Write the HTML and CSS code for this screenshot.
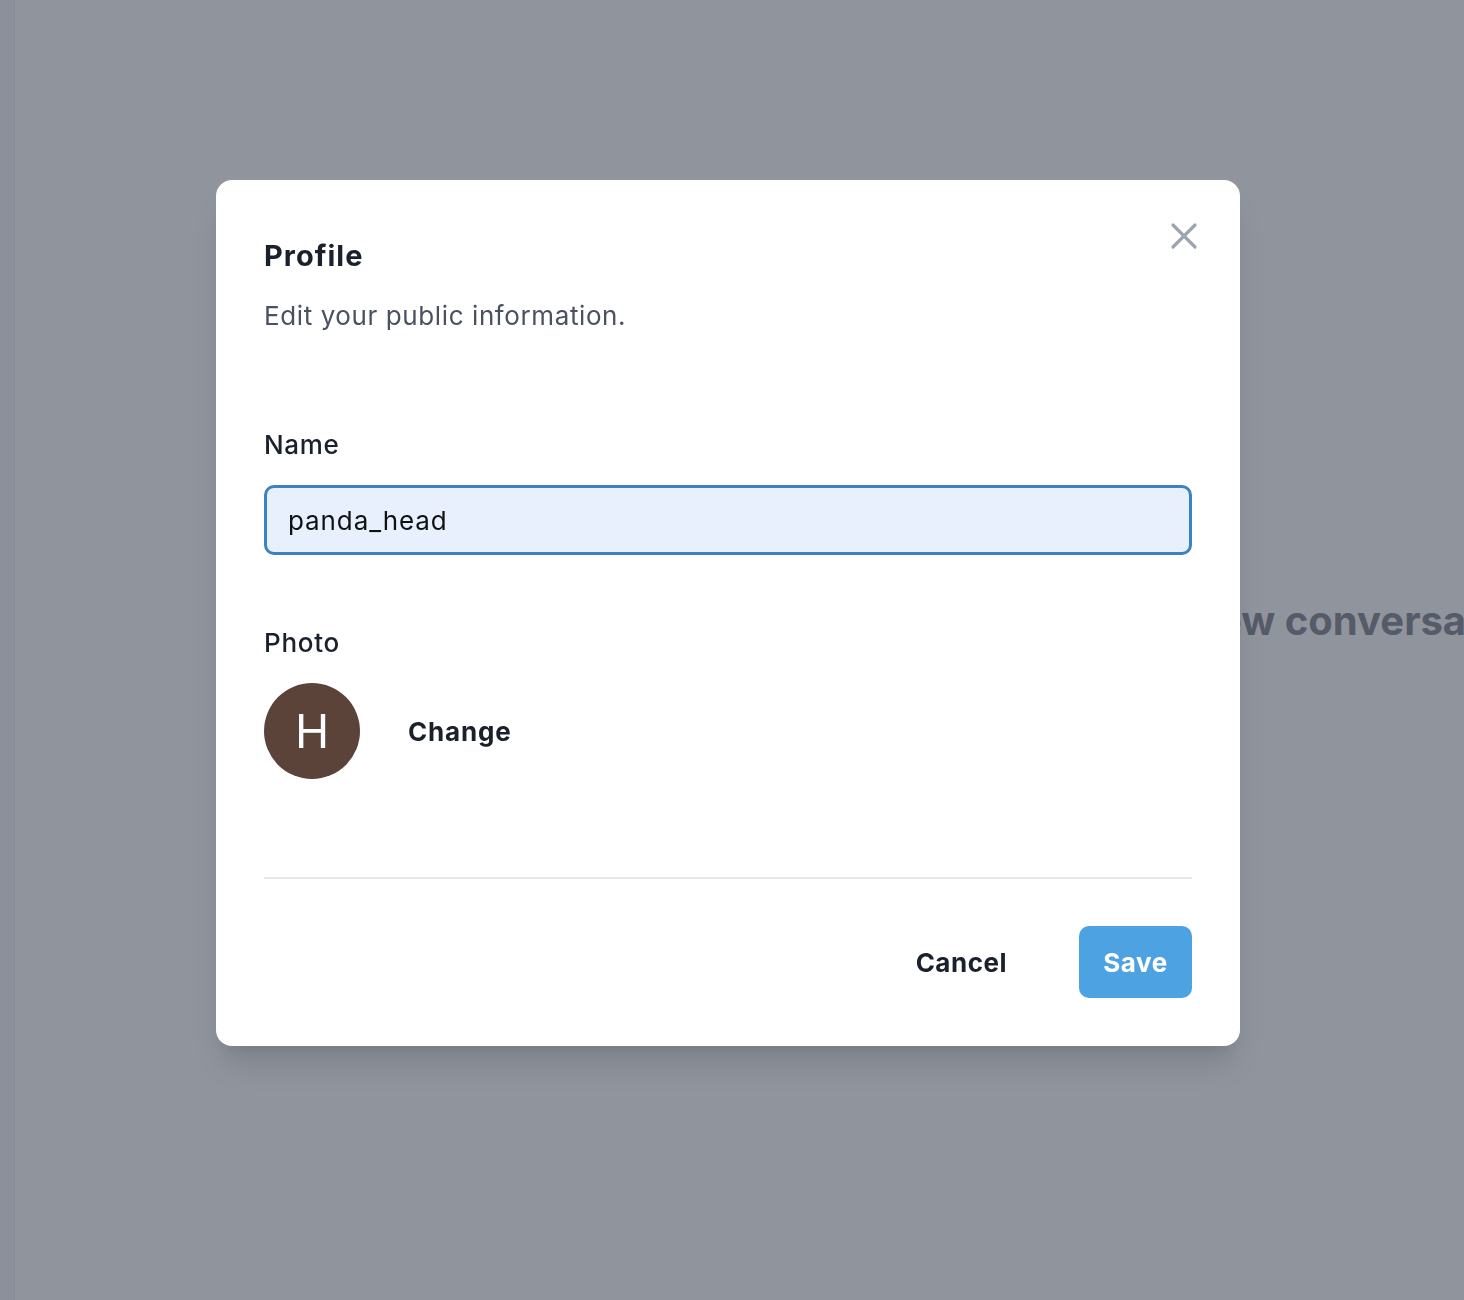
FILE: index.html
```html
<!DOCTYPE html>
<html lang="en">
<head>
<meta charset="utf-8">
<title>Profile</title>
<link rel="stylesheet" href="styles.css">
</head>
<body>
<div class="app">
  <aside class="sidebar"></aside>
  <main class="main">
    <h2 class="empty-title">Start a new conversation</h2>
  </main>
</div>
<div class="overlay">
  <div class="modal" role="dialog" aria-labelledby="dlg-title">
    <button class="close" aria-label="Close">
      <svg width="28" height="28" viewBox="0 0 28 28" fill="none" stroke="#9ea4af" stroke-width="3.2" stroke-linecap="round"><path d="M3 3L25 25M25 3L3 25"/></svg>
    </button>
    <h1 id="dlg-title" class="title">Profile</h1>
    <p class="subtitle">Edit your public information.</p>
    <div class="field">
      <label class="label" for="name">Name</label>
      <div class="input">panda_head</div>
    </div>
    <div class="field photo-field">
      <div class="label">Photo</div>
      <div class="photo-row">
        <div class="avatar">H</div>
        <button class="change">Change</button>
      </div>
    </div>
    <div class="divider"></div>
    <div class="actions">
      <button class="btn-cancel">Cancel</button>
      <button class="btn-save">Save</button>
    </div>
  </div>
</div>
</body>
</html>
```
FILE: styles.css
```css
* { box-sizing: border-box; }
html, body { margin: 0; padding: 0; }
body {
  font-family: Inter, "Noto Sans", "Liberation Sans", sans-serif;
  background: #ffffff;
  width: 1464px;
  height: 1300px;
  overflow: hidden;
}
.app {
  display: flex;
  height: 1300px;
}
.sidebar {
  width: 15px;
  background: #f4f5f7;
  border-right: 1px solid #e3e5e9;
}
.main {
  flex: 1;
  display: flex;
  align-items: flex-start;
  padding-top: 597px;
  padding-left: 1040px;
  white-space: nowrap;
  overflow: hidden;
}
.empty-title {
  margin: 0;
  font-size: 40px;
  font-weight: 700;
  color: #6c707a;
  line-height: 48px;
}
.overlay {
  position: fixed;
  inset: 0;
  background: rgba(70, 76, 92, 0.6);
  display: flex;
  justify-content: center;
  align-items: flex-start;
  padding-top: 180px;
  padding-right: 8px;
}
.modal {
  position: relative;
  width: 1024px;
  height: 866px;
  background: #ffffff;
  border-radius: 16px;
  padding: 48px;
  box-shadow: 0 24px 30px -6px rgba(0,0,0,0.12), 0 10px 12px -6px rgba(0,0,0,0.06);
  display: flex;
  flex-direction: column;
}
.close {
  position: absolute;
  top: 40px;
  right: 32px;
  width: 48px;
  height: 32px;
  border: 0;
  background: transparent;
  padding: 0;
  display: flex;
  align-items: center;
  justify-content: center;
}
.title {
  margin: 10px 0 0 0;
  font-size: 29px;
  font-weight: 700;
  color: #1a202c;
  line-height: 36px;
  letter-spacing: 1px;
}
.subtitle {
  margin: 26px 0 0 0;
  font-size: 26px;
  line-height: 32px;
  color: #4a5160;
  letter-spacing: 0.6px;
}
.field {
  margin-top: 97px;
  display: flex;
  flex-direction: column;
}
.label {
  font-size: 26px;
  font-weight: 500;
  color: #1a202c;
  line-height: 32px;
  letter-spacing: 0.7px;
}
.input {
  margin-top: 24px;
  height: 70px;
  border: 3px solid #3b82c4;
  border-radius: 10px;
  background: #e8f0fe;
  padding: 0 21px;
  display: flex;
  align-items: center;
  font-size: 26px;
  color: #111111;
  letter-spacing: 0.9px;
}
.photo-field {
  margin-top: 72px;
}
.photo-row {
  margin-top: 24px;
  display: flex;
  align-items: center;
  gap: 48px;
}
.avatar {
  width: 96px;
  height: 96px;
  border-radius: 50%;
  background: #5c4339;
  color: #ffffff;
  display: flex;
  align-items: center;
  justify-content: center;
  font-size: 46px;
  font-weight: 400;
}
.change {
  border: 0;
  background: transparent;
  padding: 0;
  font-family: inherit;
  font-size: 26px;
  font-weight: 700;
  color: #1a202c;
  letter-spacing: 0.8px;
}
.divider {
  margin-top: 98px;
  height: 2px;
  background: #e7e8ea;
}
.actions {
  margin-top: 47px;
  display: flex;
  justify-content: flex-end;
  align-items: center;
  gap: 72px;
}
.btn-cancel {
  border: 0;
  background: transparent;
  padding: 0;
  font-family: inherit;
  font-size: 26px;
  font-weight: 700;
  color: #1a202c;
  letter-spacing: 0.5px;
}
.btn-save {
  width: 113px;
  height: 72px;
  border: 0;
  border-radius: 10px;
  background: #4da3e2;
  color: #ffffff;
  font-family: inherit;
  font-size: 26px;
  font-weight: 700;
  letter-spacing: 0.5px;
}
```
